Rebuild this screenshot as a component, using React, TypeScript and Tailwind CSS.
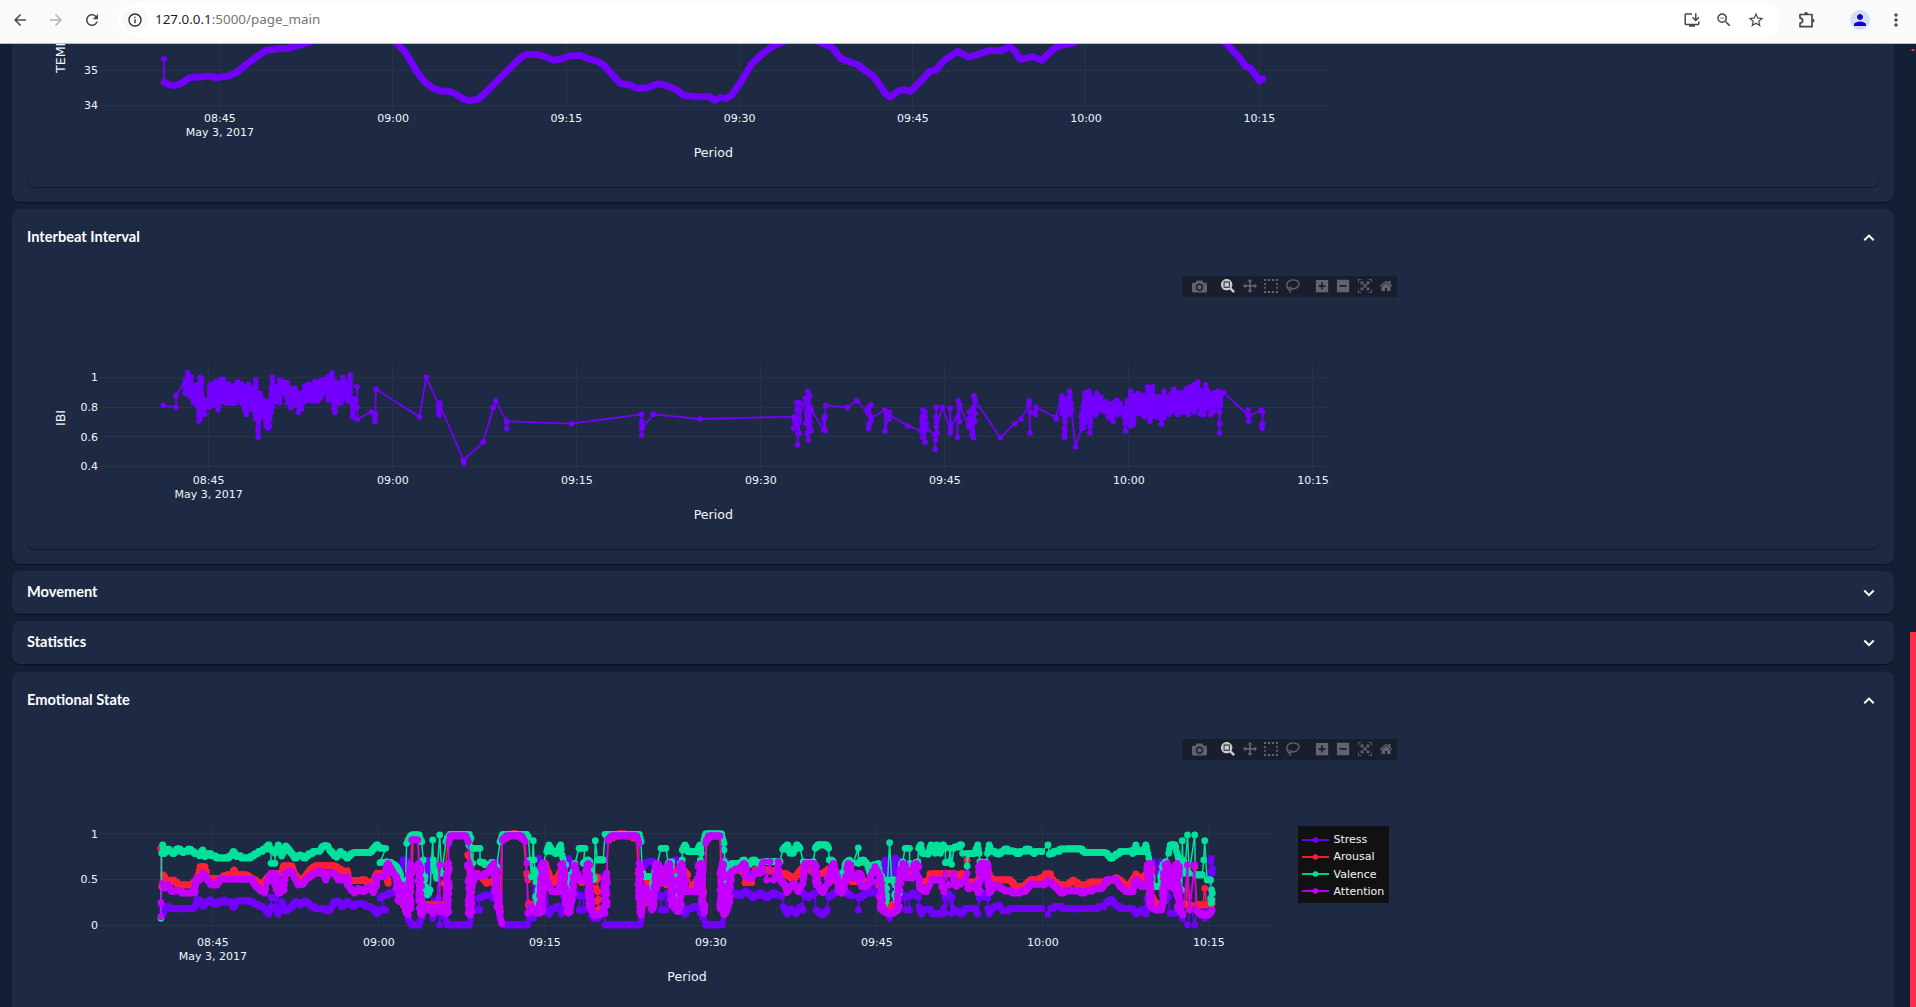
import React from "react";
import {
  MdArrowBack,
  MdArrowForward,
  MdRefresh,
  MdInfoOutline,
  MdInstallDesktop,
  MdZoomOut,
  MdStarBorder,
  MdPerson,
  MdMoreVert,
} from "react-icons/md";

type Sample = { x: number; y: number; jump: boolean };
type Block = { x: number; y: number; sx: number; data: string };

const VIOLET = "#7300ff";
const RED = "#ff1f3d";
const GREEN = "#00e29b";
const MAGENTA = "#c400ff";

/* Samples are "x,y" pairs in thirds of a pixel; a leading "j" marks a jump. */
function parse(blocks: Block[]): Sample[] {
  return blocks.flatMap((b) =>
    b.data
      .trim()
      .split(/\s+/)
      .map((t) => {
        const jump = t[0] === "j";
        const [x, y] = (jump ? t.slice(1) : t).split(",").map(Number);
        return { x: b.x + x / b.sx, y: b.y + y / 3, jump };
      })
  );
}

const linePath = (s: Sample[]) => s.map((p, i) => `${i ? "L" : "M"}${p.x.toFixed(1)} ${p.y.toFixed(1)}`).join("");
const dotPath = (s: Sample[]) => s.map((p) => `M${p.x.toFixed(1)} ${p.y.toFixed(1)}h0.01`).join("");

/* Fills the stretch between two samples with intermediate readings. */
function densify(s: Sample[], step: number): Sample[] {
  const out: Sample[] = [];
  s.forEach((p, i) => {
    if (i && !p.jump) {
      const q = s[i - 1];
      const n = Math.floor(Math.hypot(p.x - q.x, p.y - q.y) / step);
      for (let k = 1; k < n; k++) {
        const t = k / n;
        out.push({ x: q.x + (p.x - q.x) * t, y: q.y + (p.y - q.y) * t, jump: false });
      }
    }
    out.push(p);
  });
  return out;
}

/* Scores move in discrete levels: flat runs become stairs, steep runs scatter sideways. */
function scores(s: Sample[], scatter: number, density: number): Sample[] {
  let seed = 11;
  const rnd = () => ((seed = (seed * 16807) % 2147483647) / 2147483647);
  const out: Sample[] = [];
  s.forEach((p, i) => {
    const q = s[i - 1];
    if (q && !p.jump) {
      const dx = p.x - q.x;
      const dy = p.y - q.y;
      if (Math.abs(dy) > 11 && Math.abs(dy) > 2 * Math.abs(dx)) {
        const n = Math.floor(Math.abs(dy) / 1.6);
        for (let k = 1; k < n; k++) {
          if (rnd() > density) continue;
          const t = k / n;
          const lean = q.x + dx * (0.15 + 0.7 * t);
          out.push({ x: lean + (rnd() - 0.5) * 2 * scatter, y: q.y + dy * t, jump: false });
        }
      } else {
        const n = Math.max(1, Math.floor(Math.abs(dx) / 0.6));
        for (let k = 1; k < n; k++) {
          const y = q.y + (dy * k) / n;
          const level = Math.abs(dy) < 0.5 ? y : Math.round(y / 2.2) * 2.2;
          out.push({ x: q.x + (dx * k) / n, y: level, jump: false });
        }
      }
    }
    out.push(p);
  });
  return out;
}

/* Expands "x,top,bottom" envelopes into a dense zig-zag of beats. */
function burst(b: Block): Sample[] {
  let seed = 7;
  const rnd = () => ((seed = (seed * 16807) % 2147483647) / 2147483647);
  const out: Sample[] = [];
  let prev: { x: number; lo: number; hi: number } | null = null;
  b.data
    .trim()
    .split(/\s+/)
    .forEach((t) => {
      const [px, hi, lo] = t.split(",").map(Number);
      const x = b.x + px / b.sx;
      if (prev) {
        const a = prev;
        for (let xx = a.x + 0.8; xx < x - 0.5; xx += 0.8) {
          const top = Math.max(a.hi, hi) + 4;
          const bot = Math.min(a.lo, lo) - 4;
          if (bot <= top) continue;
          for (let k = 0; k < 4; k++) {
            const yy = top + Math.round((rnd() * (bot - top)) / 7) * 7;
            out.push({ x: xx, y: b.y + yy / 3, jump: false });
          }
        }
      }
      out.push({ x, y: b.y + hi / 3, jump: false });
      for (let yy = hi + 12; yy < lo - 8; yy += 9 + rnd() * 7) {
        out.push({ x: x + (rnd() - 0.5) * 0.8, y: b.y + yy / 3, jump: false });
      }
      out.push({ x, y: b.y + lo / 3, jump: false });
      prev = { x, lo, hi };
    });
  return out;
}

const temperature = parse([
  {
    x: 0, y: 0, sx: 2.45,
    data: "402,247 412,253 425,257 440,252 450,246 462,234 480,231 495,231 508,228 520,230 530,233 560,228 580,217 600,197 625,174 650,152 680,146 710,144 735,135 760,126 800,100 900,60 950,100 970,126 995,160 1020,213 1040,245 1060,264 1080,273 1100,274 1118,283 1135,297 1150,302 1172,297 1190,278 1220,240 1250,203 1283,166 1292,163 1320,164 1340,172 1357,181 1375,177 1395,168 1422,166 1440,176 1460,182 1480,196 1500,224 1520,250 1545,256 1560,265",
  },
  {
    x: 640, y: 30, sx: 2.24,
    data: "0,174 15,174 40,161 60,167 80,178 97,196 130,201 155,199 167,211 180,202 193,206 205,196 225,158 250,102 275,70 305,43 320,36 360,10 405,38 430,52 450,86 470,96 488,104 505,123 520,136 535,160 548,188 560,201 582,181 596,180 606,184 630,152 650,123 662,121 680,93 712,64 735,81 755,74 780,62 810,62 828,49 842,68 852,88 880,80 900,91 930,53 945,46 970,40 1050,-20 1240,-20 1312,38 1328,62 1346,88 1355,108 1367,114 1375,128 1388,153 1395,146",
  },
]);

const ibi: Sample[] = [
  ...parse([{ x: 0, y: 350, sx: 3, data: "490,166 528,172 528,137" }]),
  ...burst({
    x: 0, y: 350, sx: 3,
    data: "556,90,131 563,68,130 572,80,140 580,105,157 590,105,165 597,115,213 600,82,208 605,88,140 614,150,193 620,150,170 628,110,172 635,102,160 641,105,165 648,95,160 654,105,180 662,88,157 671,88,150 678,102,160 687,103,160 700,112,160 706,104,158 713,95,150 725,102,160 734,110,180 739,118,193 745,103,155 757,115,180 767,90,207 775,150,262 781,130,200 790,150,200 798,160,228 804,155,235 809,150,228 814,115,186 817,82,170 830,110,155 839,90,158 850,95,132 862,98,160 872,115,173 886,115,165 895,130,187 905,130,177 914,108,155 925,103,150 937,102,153 945,95,153 955,98,153 963,90,140 975,88,130 985,80,150 996,68,140 1001,95,175 1005,95,187 1015,100,160 1023,100,158 1028,82,140 1036,95,120 1043,105,152 1051,75,150 1058,145,200",
  }),
  ...parse([
    {
      x: 0, y: 350, sx: 3,
      data: "1062,165 1068,150 1071,172 1071,110 1072,208 1114,186 1125,215 1125,200 1126,192 1128,118 1258,200 1279,82 1316,165 1318,158 1316,172 1317,180 1316,188 1318,195 1318,180",
    },
    {
      x: 400, y: 350, sx: 3,
      data: "120,165 191,333 192,340 191,330 249,277 280,173 287,152 320,215 320,235 321,214 515,221 724,193 725,256 725,235 726,215 725,222 727,235 760,193 900,207 1181,200 1181,235 1184,210 1188,230 1190,158 1191,180 1188,205 1193,250 1193,284 1196,215 1198,180 1199,158 1197,218 1198,250 1197,205 1216,145 1217,220 1222,190 1223,124 1222,250 1225,270 1224,200 1229,138 1230,170 1228,200 1229,230 1233,242 1230,215 1234,180 1271,240 1272,205 1276,242 1275,200 1277,166 1341,172 1371,152 1402,187 1405,173 1413,165 1410,195 1406,235 1407,222 1413,212 1414,205 1454,180 1455,242 1468,187 1467,207 1466,193 1524,228",
    },
    {
      x: 780, y: 360, sx: 2.8,
      data: "395,212 397,170 400,150 398,185 399,232 401,200 406,156 404,190 406,247 407,210 410,190 406,172 409,205 434,225 434,268 435,240 438,185 438,142 437,170 440,218 438,200 455,142 477,210 476,219 476,145 478,195 497,172 497,232 499,122 503,184 503,135 528,200 531,155 530,175 538,190 538,225 540,145 539,215 542,233 543,107 544,140 545,184 546,160 546,120 617,233 657,191 675,177 697,135 698,122 700,219 700,156 715,156 715,163 717,142 773,173 774,177 773,170 789,107",
    },
  ]),
  ...burst({
    x: 780, y: 360, sx: 2.8,
    data: "789,107,158 793,115,160 797,120,233 803,118,163 807,120,163 811,94,163 815,130,156",
  }),
  ...parse([{ x: 780, y: 360, sx: 2.8, data: "816,150 827,261 845,205" }]),
  ...burst({
    x: 780, y: 360, sx: 2.8,
    data: "845,160,205 849,140,205 853,100,190 858,100,150 865,94,175 868,104,219 875,115,155 882,115,165 887,100,158 899,112,150 910,125,156 919,130,170 927,135,177 933,130,184 943,120,165 952,130,155 962,145,166 967,150,212 972,122,165 982,94,198 990,108,193 1002,100,160 1013,106,163 1021,108,170 1029,80,163 1036,105,184 1043,80,168 1052,110,170 1060,110,168 1068,120,192 1075,94,175 1088,110,163 1096,100,155 1103,87,150 1113,98,163 1122,98,155 1132,98,155 1138,87,155 1144,92,163 1148,80,150 1156,90,145 1161,73,155 1166,85,130 1170,66,130 1177,90,163 1187,92,163 1192,74,140 1198,94,145 1206,105,163 1215,98,154 1227,94,140 1233,100,137",
  }),
  ...parse([
    {
      x: 780, y: 360, sx: 2.8,
      data: "1231,156 1231,191 1231,219 1232,135 1242,97 1310,165 1311,150 1312,184 1312,168 1348,150 1351,156 1351,191 1350,205 1350,195",
    },
  ]),
];

const emo = (a: string, b: string, c: string) =>
  parse([
    { x: 140, y: 810, sx: 3, data: a },
    { x: 540, y: 810, sx: 3, data: b },
    { x: 880, y: 810, sx: 2.904, data: c },
  ]);

const stress = emo(
  "62,115 j64,280 70,312 75,290 100,295 130,298 165,292 170,270 180,270 188,288 210,270 225,283 250,272 270,275 282,292 290,273 330,273 345,282 370,292 387,313 393,290 j393,262 407,265 j407,290 415,313 426,275 435,302 450,295 467,275 480,285 495,272 515,290 540,298 570,300 583,275 597,275 605,290 622,277 640,288 660,280 700,295 711,312 720,300 737,300 j720,263 740,255 765,245 780,210 790,150 800,150 j803,325 815,345 838,345 845,325 848,280 855,150 862,195 870,150 j878,325 885,280 895,265 j899,345 j903,300 915,325 922,345 988,345 992,320 j1000,300 1020,300 j1015,265 1040,255 1060,262 1070,160 1080,325 1090,345 1163,345 j1168,325 1180,325 1190,200 1197,145 1203,200 j1215,262",
  "20,300 27,313 35,295 60,290 64,313 j70,260 80,160 86,145 92,160 105,250 120,258 j118,300 132,300 j130,258 145,260 160,325 175,325 j185,200 j195,345 300,345 305,325 310,165 325,155 340,155 350,250 365,262 j363,300 378,300 j380,250 395,255 405,150 412,150 j427,290 435,313 445,295 475,290 483,313 490,325 497,345 547,345 552,310 556,150 562,200 575,250 600,255 620,245 640,262 660,250 680,262 700,250 725,260 j730,290 742,312 752,295 768,312 780,290 790,300 j788,250 805,262 825,250 j828,300 840,310 850,315 862,298 j866,262 890,245 915,245 935,258 j955,260 j955,300 j957,264 985,245 1005,250 1020,200",
  "15,150 20,200 j28,325 j38,190 43,145 50,150 60,250 72,262 j75,300 86,300 j84,260 98,250 112,262 j113,290 120,312 128,298 145,298 152,312 180,312 184,295 j188,262 j190,310 j200,250 j208,310 j210,262 j215,298 237,312 248,295 275,295 284,312 j288,265 300,250 313,265 j313,295 317,312 325,295 345,285 355,300 470,295 j488,313 j495,295 515,290 560,298 620,295 650,290 660,275 673,270 685,285 700,295 735,298 743,312 760,298 772,312 778,260 785,200 793,155 798,188 812,188 816,155 822,240 838,260 j842,310 858,310 j860,255 868,200 870,145 j878,325 j893,345 j904,285 j914,345 j925,285 j943,325 950,290 j958,200 j962,145 965,190"
);

const arousal = emo(
  "62,115 j65,230 70,195 80,212 100,212 120,225 155,225 165,215 175,195 180,170 195,170 202,205 240,205 260,195 275,195 282,180 290,195 320,195 345,212 365,225 385,200 395,190 425,190 430,168 455,168 465,195 480,215 495,200 510,180 525,168 585,168 600,180 622,182 628,212 660,212 700,215 710,190 735,195 745,220 750,165 765,190 780,230 790,285 805,270 815,190 j820,80 835,80 j838,190 845,285 910,285 915,190 j925,90 935,75 983,75 990,190 1000,190 1020,195 1040,220 1060,215 1070,200 1075,285 1080,290 j1085,90 1110,76 1127,72 1150,85 j1160,190 1165,285 1195,285 1205,180",
  "15,160 25,190 40,218 60,190 70,170 78,260 85,285 95,250 105,180 125,218 145,190 155,200 170,200 175,298 190,298 200,190 j205,90 225,78 245,71 290,85 j295,190 j300,285 310,285 320,210 335,230 350,170 365,185 380,225 395,170 405,285 412,285 425,180 440,190 455,230 470,215 485,180 492,285 j500,90 510,78 540,78 j545,285 558,285 567,190 580,180 600,180 615,218 635,218 645,180 690,180 720,190 745,195 760,210 775,190 795,165 825,190 850,190 870,175 885,212 915,212 925,165 935,215 985,215 1005,170 1015,215",
  "10,285 28,290 50,280 60,180 75,192 95,192 105,170 115,215 140,215 145,192 220,192 225,215 237,190 250,210 j253,150 j256,220 285,215 295,180 310,165 318,205 345,212 360,208 380,212 395,232 420,228 440,210 475,205 j480,192 495,192 500,210 520,225 540,228 560,212 590,230 610,218 655,215 690,205 700,215 720,230 735,210 743,192 755,210 772,195 785,165 790,260 803,285 815,280 830,165 845,215 860,170 870,280 890,285 j893,170 j900,285 j914,170 j920,285 938,285 j943,235 j948,285 965,280"
);

const valence = emo(
  "63,325 j65,130 68,105 72,130 85,118 100,130 115,115 130,128 150,118 165,130 180,135 188,120 195,140 205,130 225,140 250,145 270,140 282,125 290,140 330,142 350,130 375,118 387,105 393,120 j393,160 405,160 j405,130 415,105 425,138 437,108 450,125 465,143 480,135 495,143 510,130 540,122 550,108 563,108 570,122 590,142 600,125 622,143 640,128 690,128 711,105 720,115 737,115 j720,158 740,155 755,160 770,170 780,190 790,230 795,255 j800,100 815,75 838,75 845,95 j850,150 j855,200 855,245 862,255 870,240 j878,90 j880,150 890,205 j899,75 j905,190 j918,95 930,73 988,73 990,110 j998,160 j1000,115 1020,115 j1020,155 1035,162 1060,160 1070,170 j1080,95 1088,73 1160,73 1165,80 j1170,150 j1175,200 j1180,92 j1182,150 1188,215 1193,280 1200,270 1208,200",
  "10,160 j20,125 27,105 38,125 50,130 62,105 66,135 72,160 80,200 83,280 92,280 98,200 105,160 j117,115 135,115 j130,160 145,150 155,210 163,205 j166,92 j172,150 190,150 j195,73 298,73 303,95 j307,190 315,200 335,200 340,260 345,200 352,160 j363,115 378,115 j385,160 395,155 400,200 405,270 412,270 420,200 427,150 j427,120 435,105 445,125 470,125 480,105 483,160 j492,90 497,72 545,72 552,100 556,200 558,250 562,170 575,160 600,160 612,150 625,165 640,150 655,160 670,155 720,155 j728,118 743,105 750,130 760,130 770,105 780,115 j790,155 805,160 820,155 j826,115 835,105 858,105 866,115 j868,150 880,155 890,190 905,200 915,165 925,152 940,158 j955,114 j955,160 970,150 980,160 990,190 1000,165 1015,160",
  "5,200 15,280 22,210 j28,98 j34,210 42,210 48,270 60,200 66,155 j73,115 86,115 j86,160 98,165 110,155 j112,115 119,105 123,130 140,133 148,105 160,130 165,105 175,130 182,105 190,115 j190,158 200,155 j204,115 j208,163 j215,115 237,105 240,130 j253,130 j253,168 j256,133 275,130 284,105 288,130 j290,155 310,160 j312,130 317,105 322,120 345,133 360,120 385,122 400,130 430,118 445,128 470,125 j488,105 j492,133 515,122 540,117 585,117 595,128 655,128 672,145 690,130 705,125 728,122 735,130 743,105 750,125 765,125 772,105 778,130 783,160 790,230 815,230 820,170 830,155 j838,130 843,105 857,105 863,130 870,160 876,240 j878,92 j880,150 885,190 j893,75 j898,190 j914,75 j916,195 936,195 j940,150 j943,92 j950,210 960,210 963,240 962,280"
);

const attention = emo(
  "63,320 j63,278 j67,220 75,235 85,225 95,245 165,248 170,205 180,210 188,190 200,205 215,225 230,225 240,208 335,208 345,225 360,240 375,248 380,220 385,205 395,190 j405,225 405,190 415,248 425,245 432,190 455,185 465,205 475,225 490,222 500,205 525,190 540,185 550,190 557,210 565,190 585,190 595,210 620,200 630,235 645,248 655,235 670,245 690,230 700,248 710,200 735,200 745,160 760,190 770,200 778,275 785,225 795,300 805,315 812,160 j815,90 833,90 j836,160 845,315 852,290 860,300 870,290 878,310 890,290 j899,165 j900,305 905,290 920,310 926,160 j926,100 930,78 978,78 985,95 j988,160 990,315 992,225 1005,190 1020,200 1040,190 1062,160 1070,250 1080,315 1085,340 j1087,90 1100,78 1145,78 1155,95 j1160,160 j1163,310 1175,290 1185,305 1200,310 1213,160",
  "0,300 10,160 20,210 35,245 60,245 68,160 75,245 85,310 98,240 105,165 115,210 135,205 145,160 153,300 165,315 195,310 200,190 j203,90 215,78 290,78 297,100 j297,160 303,315 310,250 320,235 335,300 345,240 352,160 365,220 380,210 388,160 400,290 415,305 425,160 435,245 470,245 483,160 492,310 j497,100 505,78 540,78 j546,160 545,300 552,315 565,280 570,190 585,180 600,175 612,160 620,200 635,205 645,185 660,190 672,155 j680,210 j690,155 j700,210 j715,155 720,210 735,225 740,248 760,220 775,245 785,225 795,160 820,160 835,230 848,248 860,225 880,160 890,210 905,250 915,210 925,160 935,205 960,190 965,230 985,225 1005,170",
  "0,200 5,300 30,312 52,300 60,200 66,160 75,200 95,205 105,160 115,235 135,245 150,208 175,210 185,245 j190,192 j200,225 j215,192 220,228 250,210 j253,190 j255,235 275,225 285,248 293,160 308,160 318,248 335,225 360,240 390,248 420,245 440,220 475,225 488,212 510,230 525,248 560,240 590,248 615,240 645,235 660,208 685,208 695,225 715,245 735,245 745,210 760,230 775,225 782,160 787,290 800,300 818,300 825,200 835,160 842,230 850,190 858,240 863,160 870,300 880,315 j893,165 j898,300 j914,165 j918,300 935,315 955,315 965,300"
);

const EMOTIONS = [
  { name: "Stress", color: VIOLET, line: stress, dots: scores(stress, 1, 0.45) },
  { name: "Arousal", color: RED, line: arousal, dots: scores(arousal, 1.2, 0.22) },
  { name: "Valence", color: GREEN, line: valence, dots: scores(valence, 1.6, 0.45) },
  { name: "Attention", color: MAGENTA, line: attention, dots: scores(attention, 2, 0.95) },
];

function Trace({
  samples,
  dots,
  color,
  width = 1.8,
  size = 5.6,
}: {
  samples: Sample[];
  dots?: Sample[];
  color: string;
  width?: number;
  size?: number;
}) {
  return (
    <g fill="none" stroke={color} strokeLinejoin="round" strokeLinecap="round">
      <path d={linePath(samples)} strokeWidth={width} />
      <path d={dotPath(dots ?? samples)} strokeWidth={size} />
    </g>
  );
}

type AxisProps = {
  xs: number[];
  ys: { y: number; label: string }[];
  top: number;
  bottom: number;
  labels: number;
  right: number;
  period: [number, number];
};
const TIMES = ["08:45", "09:00", "09:15", "09:30", "09:45", "10:00", "10:15"];

function Axes({ xs, ys, top, bottom, labels, right, period }: AxisProps) {
  return (
    <g fontFamily="'DejaVu Sans', sans-serif" fontSize="11" fill="#f2f5fa">
      <g stroke="#283442" strokeWidth="1" shapeRendering="crispEdges">
        {xs.map((x) => (
          <path key={x} d={`M${Math.floor(x) + 0.5} ${top}V${bottom}`} />
        ))}
        {ys.map((t) => (
          <path key={t.y} d={`M100 ${Math.floor(t.y) + 0.5}H${right}`} />
        ))}
      </g>
      {ys.map((t) => (
        <text key={t.label} x="98" y={t.y + 4} textAnchor="end">
          {t.label}
        </text>
      ))}
      {xs.map((x, i) => (
        <text key={x} x={x + 0.4} y={labels} textAnchor="middle">
          {TIMES[i]}
        </text>
      ))}
      <text x={xs[0] + 0.4} y={labels + 14} textAnchor="middle">
        May 3, 2017
      </text>
      <text x={period[0]} y={period[1]} fontSize="12.6" textAnchor="middle">
        Period
      </text>
    </g>
  );
}

const CAMERA =
  "m500 450c-83 0-150-67-150-150 0-83 67-150 150-150 83 0 150 67 150 150 0 83-67 150-150 150z m400 150h-120c-16 0-34 13-39 29l-31 93c-6 15-23 28-40 28h-340c-16 0-34-13-39-28l-31-94c-6-15-23-28-40-28h-120c-55 0-100-45-100-100v-450c0-55 45-100 100-100h800c55 0 100 45 100 100v450c0 55-45 100-100 100z m-400-550c-138 0-250 112-250 250 0 138 112 250 250 250 138 0 250-112 250-250 0-138-112-250-250-250z m365 380c-19 0-35 16-35 35 0 19 16 35 35 35 19 0 35-16 35-35 0-19-16-35-35-35z";
const ZOOM =
  "m1000-25l-250 251c40 63 63 138 63 218 0 224-182 406-407 406-224 0-406-182-406-406s183-406 407-406c80 0 155 22 218 62l250-250 125 125z m-812 250l0 438 437 0 0-438-437 0z m62 375l313 0 0-312-313 0 0 312z";
const PAN =
  "m1000 350l-187 188 0-125-250 0 0 250 125 0-188 187-187-187 125 0 0-250-250 0 0 125-188-188 186-187 0 125 252 0 0-250-125 0 187-188 188 188-125 0 0 250 250 0 0-126 187 188z";
const PLUS =
  "m1 787l0-875 875 0 0 875-875 0z m687-500l-187 0 0-187-125 0 0 187-188 0 0 125 188 0 0 187 125 0 0-187 187 0 0-125z";
const MINUS = "m0 788l0-876 875 0 0 876-875 0z m688-500l-500 0 0 125 500 0 0-125z";
const AUTO =
  "m250 850l-187 0-63 0 0-62 0-188 63 0 0 188 187 0 0 62z m688 0l-188 0 0-62 188 0 0-188 62 0 0 188 0 62-62 0z m-875-938l0 188-63 0 0-188 0-62 63 0 187 0 0 62-187 0z m875 188l0-188-188 0 0-62 188 0 62 0 0 62 0 188-62 0z m-125 188l-1 0-93-94-156 156 156 156 92-93 2 0 0 250-250 0 0-2 93-92-156-156-156 156 94 92 0 2-250 0 0-250 0 0 93 93 157-156-157-156-93 94 0 0 0-250 250 0 0 0-94 93 156 157 156-157-93-93 0 0 250 0 0 250z";
const HOME =
  "m786 296v-267q0-15-11-26t-25-10h-214v214h-143v-214h-214q-15 0-25 10t-11 26v267q0 1 0 2t0 2l321 264 321-264q1-1 1-4z m124 39l-34-41q-5-5-12-6h-2q-7 0-12 3l-386 322-386-322q-7-4-13-4-7 2-12 7l-35 41q-4 5-3 13t6 12l401 334q18 15 42 15t43-15l136-114v109q0 8 5 13t13 5h107q8 0 13-5t5-13v-227l122-102q5-5 6-12t-4-13z";

function Tool({ d, w = 1000 }: { d: string; w?: number }) {
  return (
    <svg viewBox={`0 0 ${w} 1000`} className="block h-[14px] w-[14px]" fill="currentColor">
      <path d={d} transform="matrix(1 0 0 -1 0 850)" />
    </svg>
  );
}

function ModeBar() {
  return (
    <div className="absolute left-[1155px] top-1 flex h-[21px] w-[215px] items-start bg-[#181e2b] pl-[10px] pt-[3px] text-[#5f646e]">
      <svg viewBox="0 0 1000 1000" className="block h-[15px] w-[15px]" fill="currentColor">
        <path d={CAMERA} transform="matrix(1 0 0 -1 0 850)" />
      </svg>
      <div className="ml-[14px] flex gap-[7.6px]">
        <span className="text-[#c9cbcf]">
          <Tool d={ZOOM} />
        </span>
        <Tool d={PAN} />
        <svg viewBox="0 0 14 14" className="h-[14px] w-[14px]" fill="none" stroke="currentColor" strokeWidth="1.8">
          <path d="M0 1H14M0 13H14" strokeDasharray="2.2 1.73" />
          <path d="M1 4V11M13 4V11" strokeDasharray="2 1.8" />
        </svg>
        <svg viewBox="0 0 14 14" className="h-[14px] w-[14px]" fill="none" stroke="currentColor" strokeWidth="1.4">
          <path d="M2 9.2C0 7 .5 3.500 3.200 1.900C6.500 0 12.300.8 13 4.200C13.600 7.800 9 10.600 5 9.800" />
          <path d="M3.300 8.200C1.600 8.600 1.500 10.600 3.200 10.600C5 10.600 6 8.400 4.200 8.100M4.200 10.400C3.600 11.600 4 12.600 4.300 13.800" />
        </svg>
      </div>
      <div className="ml-[15.2px] flex gap-[7.4px]">
        <Tool d={PLUS} w={875} />
        <Tool d={MINUS} w={875} />
        <Tool d={AUTO} />
        <Tool d={HOME} w={928.6} />
      </div>
    </div>
  );
}

function Puzzle() {
  return (
    <svg viewBox="0 0 18 18" className="h-[18px] w-[18px]" fill="none" stroke="currentColor" strokeWidth="1.7">
      <path d="M2 3.500H14V15.700H2V12.300C5.600 11.500 5.600 7.700 2 6.900Z" strokeLinejoin="round" />
      <path d="M6.200 3A1.900 1.900 0 0 1 10 3ZM14.600 7.700A1.900 1.900 0 0 1 14.600 11.500Z" fill="currentColor" stroke="none" />
    </svg>
  );
}

function Chevron({ up }: { up?: boolean }) {
  return (
    <svg viewBox="0 0 12 8" className="h-2 w-3" fill="none" stroke="white" strokeWidth="2">
      <path d={up ? "M1.300 6.200L6 1.600L10.700 6.200" : "M1.300 1.500L6 6.100L10.700 1.500"} />
    </svg>
  );
}

function Title({ text, open }: { text: string; open?: boolean }) {
  return (
    <div className={"flex shrink-0 items-center justify-between pr-[4px] " + (open ? "h-[58px] mb-[5px]" : "h-[43px]")}>
      <h2 className="pb-[2px] font-[Lato] text-[14.6px] font-bold leading-5 text-white">{text}</h2>
      <Chevron up={open} />
    </div>
  );
}

function Card({ className, children }: { className: string; children: React.ReactNode }) {
  return (
    <section
      className={"flex shrink-0 flex-col rounded-lg bg-[#1e2a43] px-[15px] shadow-[0_1px_1px_rgba(0,0,0,0.45)] " + className}
    >
      {children}
    </section>
  );
}

const PANEL = "relative shrink-0 bg-[#1e2a43] shadow-[0_1px_1px_rgba(0,0,0,0.4)] ";

export default function App() {
  return (
    <div className="flex h-[1007px] w-[1916px] flex-col overflow-hidden bg-[#131f35]">
      <header className="flex h-[44px] shrink-0 items-start border-b border-[#b9bcc0] bg-[#fafafa] pt-[3px] text-[#474747]">
        <div className="flex h-[34px] w-[118px] items-center gap-[18px] pl-[11px]">
          <MdArrowBack size={18} />
          <MdArrowForward size={18} className="text-[#b4b4b4]" />
          <MdRefresh size={18} />
        </div>
        <div className="flex h-[34px] w-[1662px] items-center rounded-full bg-white pl-[4px]">
          <span className="flex h-[26px] w-[26px] items-center justify-center rounded-full bg-[#f9f9f9] text-[#2a2a2a]">
            <MdInfoOutline size={16} />
          </span>
          <span className="ml-[7px] pb-px font-['Noto_Sans'] text-[13.4px] text-[#1f1f1f]">
            127.0.0.1<span className="text-[#757575]">:5000/page_main</span>
          </span>
          <div className="ml-auto flex items-center gap-[14px] pr-[15px]">
            <MdInstallDesktop size={18} />
            <MdZoomOut size={18} />
            <MdStarBorder size={18} />
          </div>
        </div>
        <div className="flex h-[34px] items-center pl-[18px]">
          <Puzzle />
          <span className="ml-[34px] flex h-5 w-5 items-center justify-center rounded-full bg-[#d0dffb] text-[#1a00c4]">
            <MdPerson size={18} />
          </span>
          <MdMoreVert size={20} className="ml-[16px]" />
        </div>
      </header>

      <div className="flex min-h-0 grow justify-between pl-3">
        <main className="flex w-[1882px] flex-col gap-[7px] overflow-visible">
          <Card className="h-[158px] rounded-t-none">
            <div className={PANEL + "h-[143px] rounded-b-lg"}>
              <svg viewBox="27 44 1373 143" className="h-[143px] w-[1373px]">
                <Axes
                  xs={[219.4, 392.7, 566, 739.2, 912.4, 1085.6, 1259]}
                  ys={[{ y: 70.3, label: "35" }, { y: 105.3, label: "34" }]}
                  top={44}
                  bottom={110}
                  labels={122}
                  right={1327}
                  period={[713.3, 157]}
                />
                <text
                  transform="translate(65 73) rotate(-90)"
                  fontFamily="'DejaVu Sans', sans-serif"
                  fontSize="12.6"
                  fill="#f2f5fa"
                >
                  TEMP
                </text>
                <path d="M164 59V82" stroke={VIOLET} strokeWidth="1.8" />
                <path d="M164 59h.01" stroke={VIOLET} strokeWidth="6" strokeLinecap="round" />
                <Trace samples={temperature} dots={densify(temperature, 1.7)} color={VIOLET} size={6.8} />
              </svg>
            </div>
          </Card>

          <Card className="h-[355px]">
            <Title text="Interbeat Interval" open />
            <div className={PANEL + "h-[277px] rounded-lg"}>
              <svg viewBox="27 272 1373 277" className="h-[277px] w-[1373px]">
                <Axes
                  xs={[208.3, 392.4, 576.4, 760.4, 944.5, 1128.5, 1312.6]}
                  ys={[
                    { y: 377.3, label: "1" },
                    { y: 407.2, label: "0.8" },
                    { y: 436.6, label: "0.6" },
                    { y: 466.3, label: "0.4" },
                  ]}
                  top={364}
                  bottom={471}
                  labels={484}
                  right={1327}
                  period={[713.3, 519]}
                />
                <text
                  transform="translate(65 418) rotate(-90)"
                  fontFamily="'DejaVu Sans', sans-serif"
                  fontSize="12.6"
                  textAnchor="middle"
                  fill="#f2f5fa"
                >
                  IBI
                </text>
                <Trace samples={ibi} color={VIOLET} />
              </svg>
              <ModeBar />
            </div>
          </Card>

          <Card className="h-[43px]">
            <Title text="Movement" />
          </Card>
          <Card className="h-[43px]">
            <Title text="Statistics" />
          </Card>

          <Card className="mt-px h-[360px]">
            <Title text="Emotional State" open />
            <div className={PANEL + "h-[290px] rounded-lg"}>
              <svg viewBox="27 735 1373 290" className="h-[290px] w-[1373px]">
                <Axes
                  xs={[212.4, 378.4, 544.4, 710.4, 876.4, 1042.4, 1208.4]}
                  ys={[
                    { y: 833.5, label: "1" },
                    { y: 879.4, label: "0.5" },
                    { y: 925.4, label: "0" },
                  ]}
                  top={826}
                  bottom={933}
                  labels={946}
                  right={1274}
                  period={[687, 981]}
                />
                {EMOTIONS.map((e) => (
                  <Trace key={e.name} samples={e.line} dots={e.dots} color={e.color} width={1.5} size={6.8} />
                ))}
              </svg>
              <div className="absolute left-[1271px] top-[91px] flex h-[77px] w-[91px] flex-col justify-between bg-[#111111] pb-[4px] pt-[6px] pl-[4px] font-['DejaVu_Sans'] text-[11px] leading-[15px] text-[#f2f5fa]">
                {EMOTIONS.map((e) => (
                  <div key={e.name} className="flex items-center gap-[4.5px]">
                    <svg viewBox="0 0 27 6" className="h-[6px] w-[27px]">
                      <path d="M0 3H27" stroke={e.color} strokeWidth="1.8" />
                      <circle cx="13.5" cy="3" r="2.700" fill={e.color} />
                    </svg>
                    {e.name}
                  </div>
                ))}
              </div>
              <ModeBar />
            </div>
          </Card>
        </main>

        <div className="flex w-[6px] flex-col items-center">
          <svg viewBox="0 0 4 2" className="mt-[5px] h-[2px] w-[4px]">
            <path d="M0 2L1.200 0H2.800L4 2Z" fill="#ff2d46" />
          </svg>
          <div className="mt-[581px] w-[6px] grow bg-[#ff2d46]" />
        </div>
      </div>
    </div>
  );
}
